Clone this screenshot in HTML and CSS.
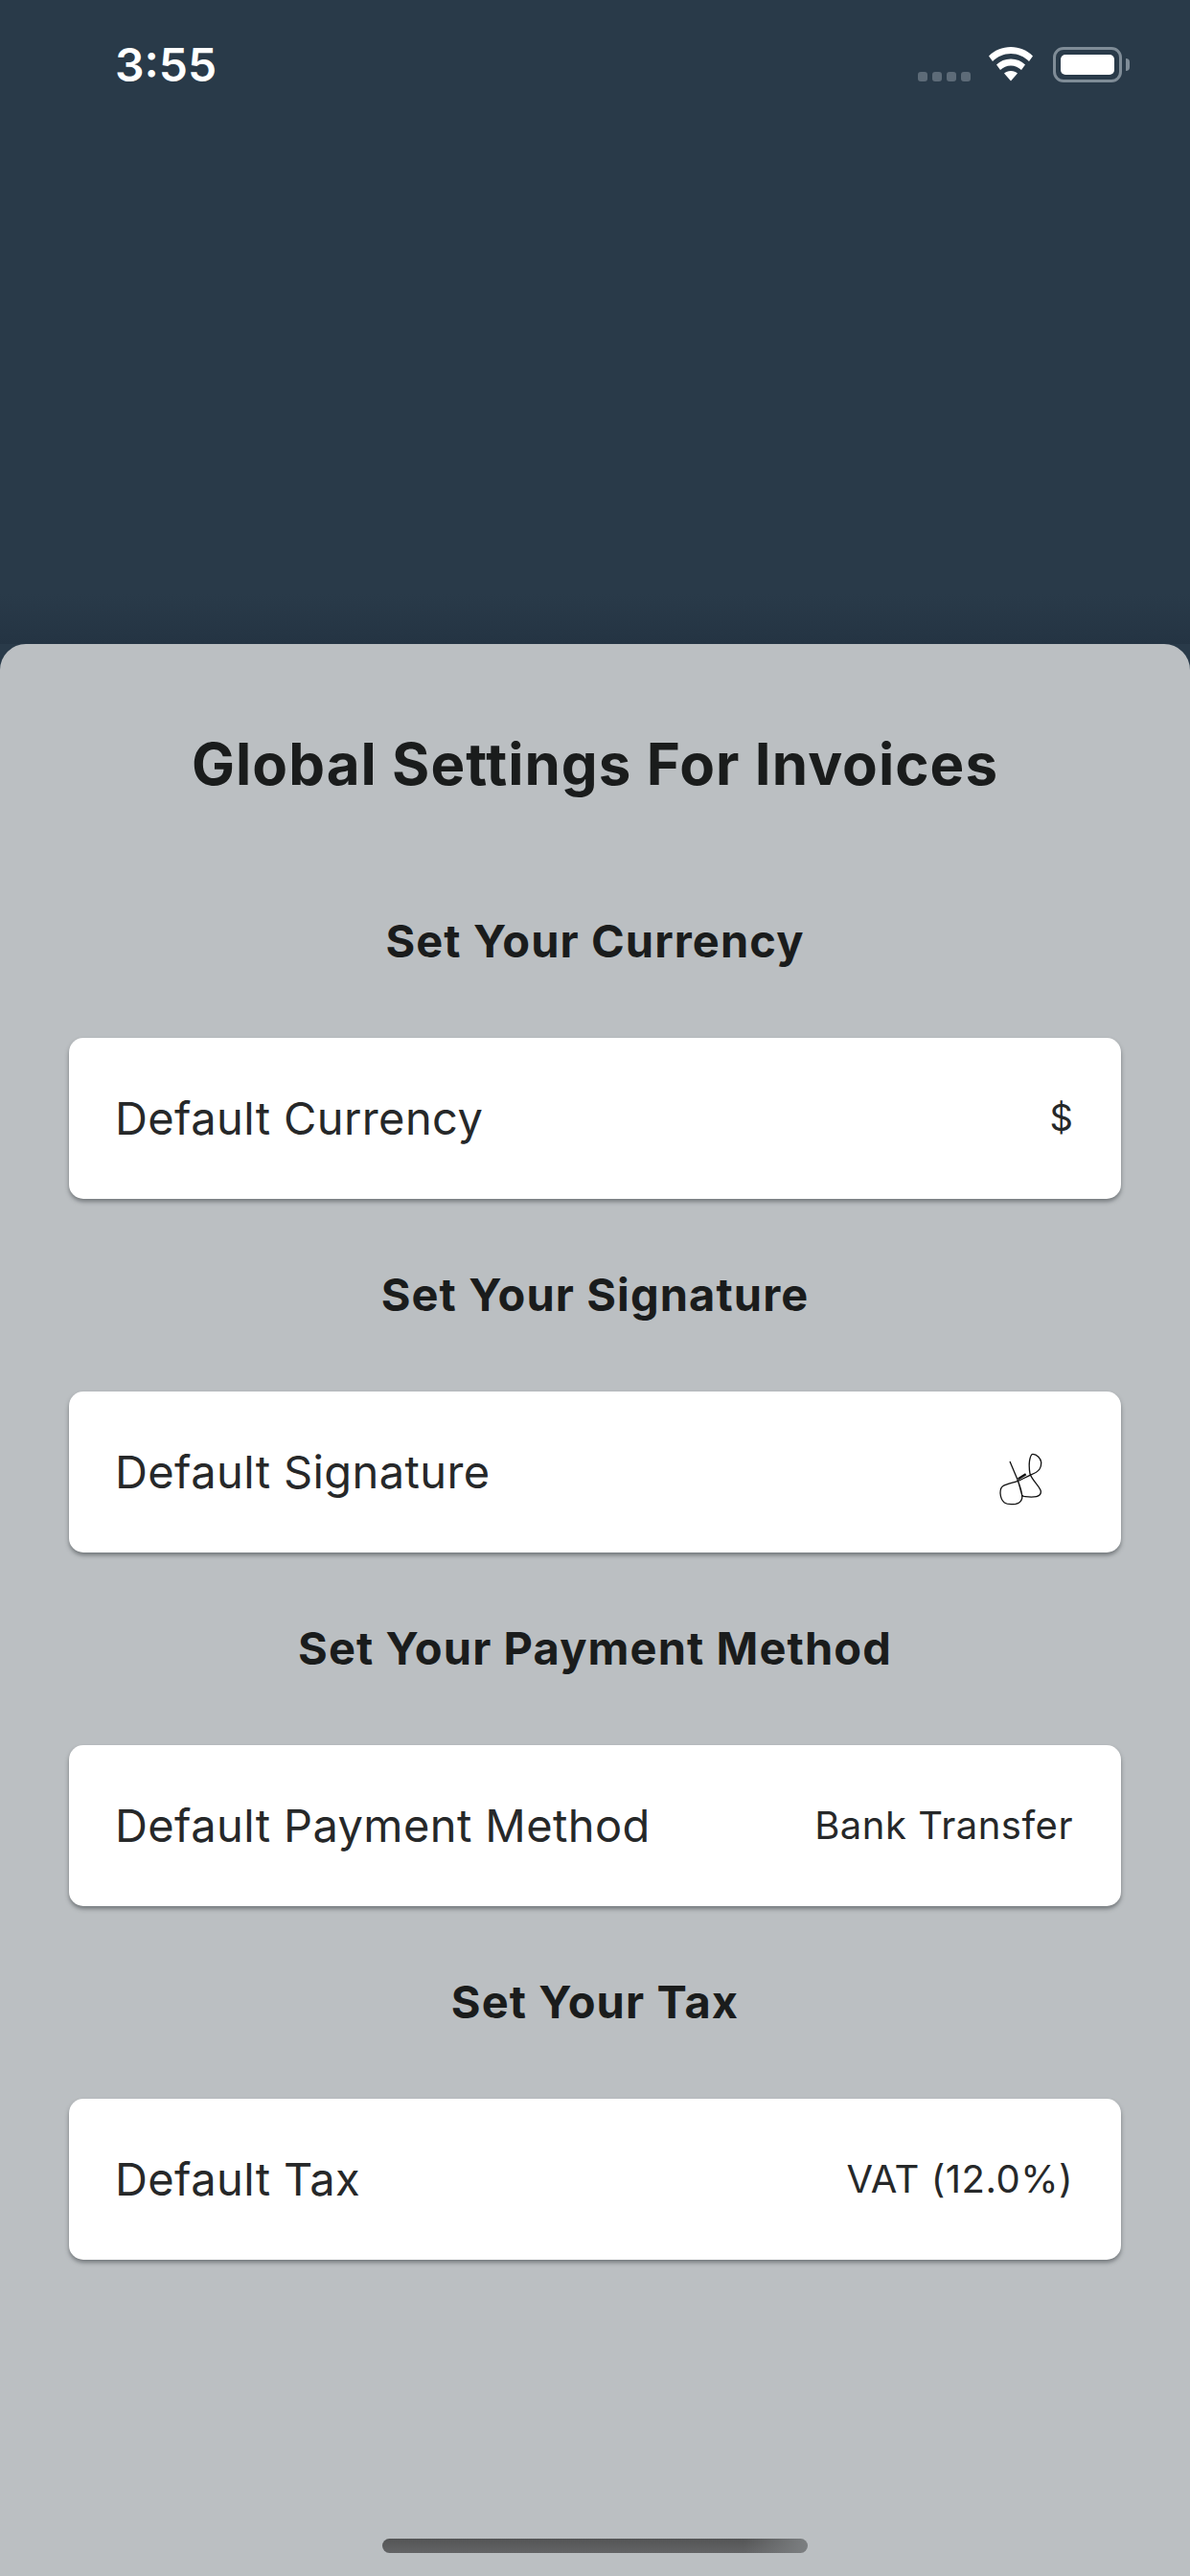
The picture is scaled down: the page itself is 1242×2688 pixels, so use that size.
FILE: index.html
```html
<!DOCTYPE html>
<html lang="en">
<head>
<meta charset="utf-8">
<title>Global Settings For Invoices</title>
<link rel="stylesheet" href="styles.css">
</head>
<body>
<div class="screen">
  <header class="status-bar">
    <span class="clock">3:55</span>
    <div class="status-icons">
      <div class="signal"><i></i><i></i><i></i><i></i></div>
      <svg class="wifi" width="48" height="36" viewBox="0 0 48 36">
        <path fill="#fff" d="M24 0C15 0 7 3.500 1 9.500L5 15C10 10 16.500 7 24 7C31.500 7 38 10 43 15L47 9.500C41 3.500 33 0 24 0Z"/>
        <path fill="#fff" d="M24 12.500C18 12.500 13 14.800 9 18.500L13 24C16 21.300 19.800 19.500 24 19.500C28.200 19.500 32 21.300 35 24L39 18.500C35 14.800 30 12.500 24 12.500Z"/>
        <path fill="#fff" d="M24 25C21 25 18.800 26 17 27.500L24 35.500L31 27.500C29.200 26 27 25 24 25Z"/>
      </svg>
      <div class="battery"><div class="battery-level"></div></div>
    </div>
  </header>
  <main class="sheet">
    <h1 class="sheet-title">Global Settings For Invoices</h1>
    <section class="setting">
      <h2 class="setting-heading">Set Your Currency</h2>
      <div class="setting-card"><span>Default Currency</span><span class="value symbol">$</span></div>
    </section>
    <section class="setting">
      <h2 class="setting-heading">Set Your Signature</h2>
      <div class="setting-card">
        <span>Default Signature</span>
        <svg class="signature" width="48" height="56" viewBox="0 0 48 56">
          <path d="M13 9L20.700 27.300C23 33 24.500 41 25.700 44C26.500 45.500 27.500 45.700 29 45.700C34 46.200 42 46 44 44C45.500 42.500 45.500 40.500 45 39C43 34 36 28 34 22C33 16 33 10 34 6C34.700 3 35.500 1.300 37 1.300C41 1.300 45.700 6 45.700 10.700C45.700 13 45 15.500 44 17C42 20 38 21.800 34 23.300C29 25.500 25 28.300 20.700 29.700C15 31.500 9 32.800 5.700 34.700C3.500 36 3 39 3 42C3.200 46 5 50 7.300 52C10 53.800 15 53.800 19 53.300C22 52.800 25 50.500 25.700 47.300C26 44.500 25.500 43 25 40.700C24 36 22 31 20.700 27" fill="none" stroke="#111" stroke-width="1.300"/>
          <path d="M21.700 27.300L29.700 22.300" fill="none" stroke="#111" stroke-width="2.500"/>
        </svg>
      </div>
    </section>
    <section class="setting">
      <h2 class="setting-heading">Set Your Payment Method</h2>
      <div class="setting-card"><span>Default Payment Method</span><span class="value">Bank Transfer</span></div>
    </section>
    <section class="setting">
      <h2 class="setting-heading">Set Your Tax</h2>
      <div class="setting-card"><span>Default Tax</span><span class="value">VAT (12.0%)</span></div>
    </section>
    <div class="home-indicator"></div>
  </main>
</div>
</body>
</html>
```
FILE: styles.css
```css
* { box-sizing: border-box; }

html, body {
  margin: 0;
  padding: 0;
}

body {
  font-family: Inter, "Noto Sans", sans-serif;
  color: #1a1c1c;
  background: #293a49;
}

.screen {
  width: 1242px;
  height: 2688px;
  display: flex;
  flex-direction: column;
  overflow: hidden;
  background: #293a49;
}

.status-bar {
  height: 672px;
  flex: none;
  display: flex;
  justify-content: space-between;
  align-items: flex-start;
  padding: 44px 71px 0 120px;
  background: linear-gradient(to bottom, #293a49 0, #293a49 620px, #243443 672px);
}

.clock {
  color: #fff;
  font-size: 48px;
  line-height: 48px;
  font-weight: 600;
}

.status-icons {
  display: flex;
  align-items: flex-start;
  padding-top: 5px;
}

.signal {
  display: flex;
  gap: 5px;
  margin-top: 26px;
  margin-right: 18px;
}

.signal i {
  display: block;
  width: 10px;
  height: 10px;
  border-radius: 3px;
  background: #5d6b78;
}

.wifi {
  margin-right: 20px;
}

.battery {
  position: relative;
  width: 72px;
  height: 37px;
  padding: 5px;
  border: 3px solid #7f8c97;
  border-radius: 11px;
}

.battery::after {
  content: "";
  position: absolute;
  right: -11px;
  top: 9px;
  width: 4px;
  height: 13px;
  border-radius: 0 4px 4px 0;
  background: #7f8c97;
}

.battery-level {
  height: 100%;
  border-radius: 5px;
  background: #fff;
}

.sheet {
  position: relative;
  flex: 1;
  display: flex;
  flex-direction: column;
  padding: 88px 72px 0;
  background: #bbbfc2;
  border-radius: 27px 27px 0 0;
}

.sheet-title {
  margin: 0 0 48px;
  height: 74px;
  font-size: 60px;
  line-height: 74px;
  font-weight: 700;
  text-align: center;
  letter-spacing: 1.05px;
}

.setting {
  display: flex;
  flex-direction: column;
}

.setting-heading {
  margin: 0;
  height: 201px;
  padding-bottom: 2px;
  display: flex;
  align-items: center;
  justify-content: center;
  font-size: 47px;
  font-weight: 700;
  letter-spacing: 1.1px;
}

.setting-card {
  height: 168px;
  display: flex;
  align-items: center;
  justify-content: space-between;
  padding: 0 50px 2px 48px;
  font-size: 47px;
  letter-spacing: 0.4px;
  color: #262829;
  background: #fff;
  border-radius: 15px;
  box-shadow: 0 3px 4px rgba(60, 65, 70, 0.55);
}

.value {
  font-size: 40px;
  letter-spacing: 0.5px;
}

.symbol {
  font-size: 38px;
  letter-spacing: 0;
}

.signature {
  margin-right: 31px;
  margin-top: 18px;
}

.home-indicator {
  position: absolute;
  left: 399px;
  bottom: 24px;
  width: 444px;
  height: 15px;
  border-radius: 8px;
  background:
    linear-gradient(to right, rgba(124, 127, 129, 0) 85%, #7c7f81 100%),
    linear-gradient(to bottom, #535455, #636466);
}
```
